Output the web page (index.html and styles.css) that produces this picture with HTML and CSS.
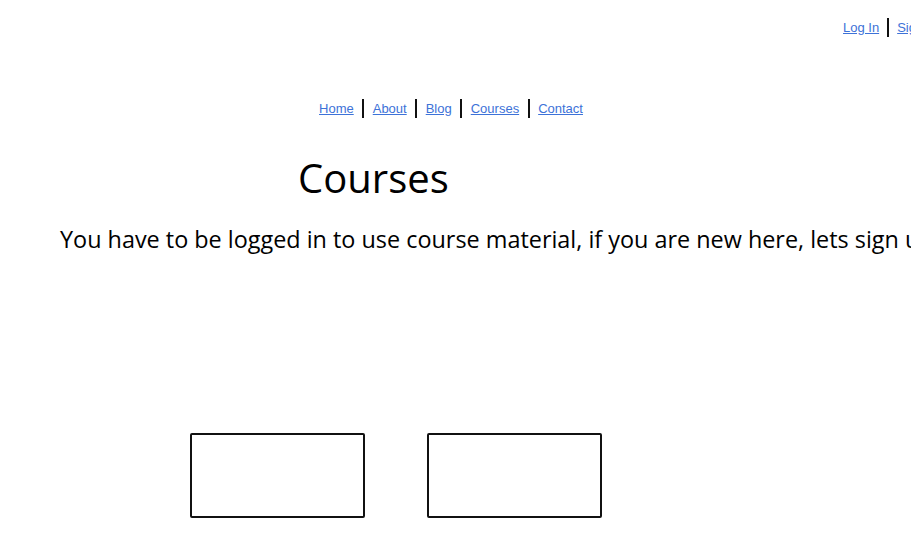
FILE: index.html
```html
<!DOCTYPE html>
<html>
<head>
<meta charset="utf-8">
<link rel="stylesheet" href="styles.css">
</head>
<body>
<div class="page">
  <div class="topbar">
    <a href="#" class="link">Log In</a>
    <span class="sep"></span>
    <a href="#" class="link">Sign Up</a>
  </div>
  <nav class="nav">
    <a href="#" class="link">Home</a>
    <span class="sep"></span>
    <a href="#" class="link">About</a>
    <span class="sep"></span>
    <a href="#" class="link">Blog</a>
    <span class="sep"></span>
    <a href="#" class="link">Courses</a>
    <span class="sep"></span>
    <a href="#" class="link">Contact</a>
  </nav>
  <h1 class="title">Courses</h1>
  <p class="intro">You have to be logged in to use course material, if you are new here, lets sign up</p>
  <div class="cards">
    <div class="card"></div>
    <div class="card"></div>
  </div>
</div>
</body>
</html>
```
FILE: styles.css
```css
html, body {
  margin: 0;
  padding: 0;
  background: #fff;
  overflow: hidden;
}
.page {
  width: 911px;
  height: 540px;
  overflow: hidden;
  font-family: "Open Sans", "Liberation Sans", sans-serif;
  color: #000;
}
.link {
  color: #3d72d8;
  text-decoration: underline;
  font-family: "Liberation Sans", Arial, sans-serif;
  font-size: 13px;
  flex-shrink: 0;
}
.sep {
  display: inline-block;
  flex-shrink: 0;
  width: 2px;
  height: 19px;
  background: #111;
}
.topbar {
  display: flex;
  align-items: center;
  gap: 8px;
  white-space: nowrap;
  padding-left: 843px;
  padding-top: 17px;
  height: 20px;
}
.nav {
  display: flex;
  align-items: center;
  justify-content: center;
  gap: 8.5px;
  margin-top: 61px;
  height: 20px;
  padding-right: 9px;
}
.title {
  margin: 36px 0 0 298px;
  font-size: 40px;
  font-weight: 400;
  line-height: 48px;
}
.intro {
  margin: 23px 0 0 60px;
  font-size: 23.4px;
  line-height: 28px;
  white-space: nowrap;
}
.cards {
  display: flex;
  gap: 62px;
  padding-left: 190px;
  margin-top: 180px;
}
.card {
  width: 171px;
  height: 81px;
  border: 2px solid #111;
  border-radius: 2px;
}
```
